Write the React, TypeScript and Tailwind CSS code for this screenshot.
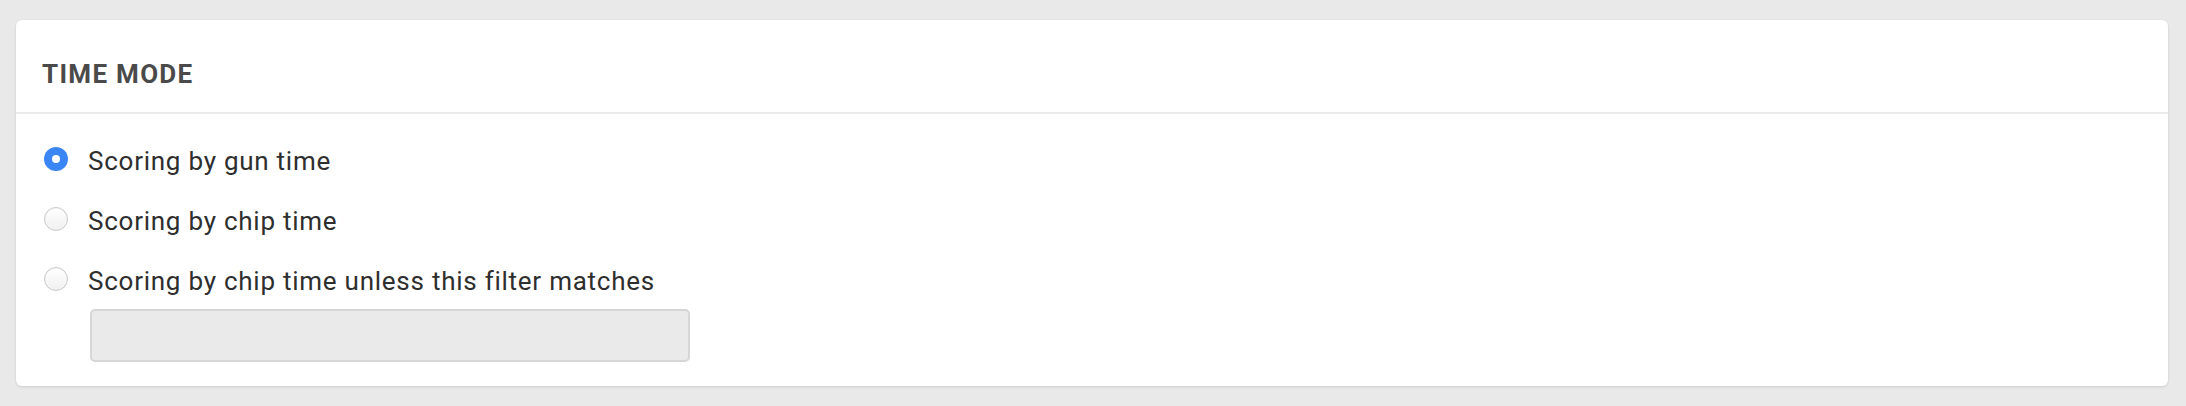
import React from "react";

function Radio({ checked }: { checked: boolean }) {
  if (checked) {
    return (
      <span className="flex h-[24px] w-[24px] shrink-0 items-center justify-center rounded-full bg-[#3b86f6]">
        <span className="h-[8px] w-[8px] rounded-full bg-white" />
      </span>
    );
  }
  return (
    <span className="h-[24px] w-[24px] shrink-0 rounded-full border border-[#c9c9c9] bg-gradient-to-b from-[#ffffff] to-[#f0f0f0] shadow-[inset_0_1px_1px_rgba(0,0,0,0.04)]" />
  );
}

function Row({ checked, label }: { checked: boolean; label: string }) {
  return (
    <div className="flex h-[60px] items-center gap-[20px]">
      <Radio checked={checked} />
      <span className="pt-[4px] text-[26px] leading-[26px] tracking-[0.75px] text-[#2e2e2e]">{label}</span>
    </div>
  );
}

export default function App() {
  return (
    <div
      className="h-[406px] w-full bg-[#e9e9e9] pl-[16px] pr-[18px] pt-[20px]"
      style={{ fontFamily: "Roboto, 'Liberation Sans', sans-serif" }}
    >
      <div className="h-[366px] rounded-[6px] bg-white shadow-[0_1px_3px_rgba(0,0,0,0.12)]">
        <div className="border-b-2 border-[#ebebeb] pl-[26px] pt-[41px] pb-[25px]">
          <h2 className="text-[26px] font-bold leading-[26px] tracking-[1.3px] text-[#4a4a4a]">TIME MODE</h2>
        </div>
        <div className="pl-[28px] pt-[15px]">
          <Row checked={true} label="Scoring by gun time" />
          <Row checked={false} label="Scoring by chip time" />
          <Row checked={false} label="Scoring by chip time unless this filter matches" />
          <div className="pl-[46px]">
            <div className="h-[53px] w-[600px] rounded-[5px] border-2 border-[#d6d6d6] bg-[#eaeaea]" />
          </div>
        </div>
      </div>
    </div>
  );
}
